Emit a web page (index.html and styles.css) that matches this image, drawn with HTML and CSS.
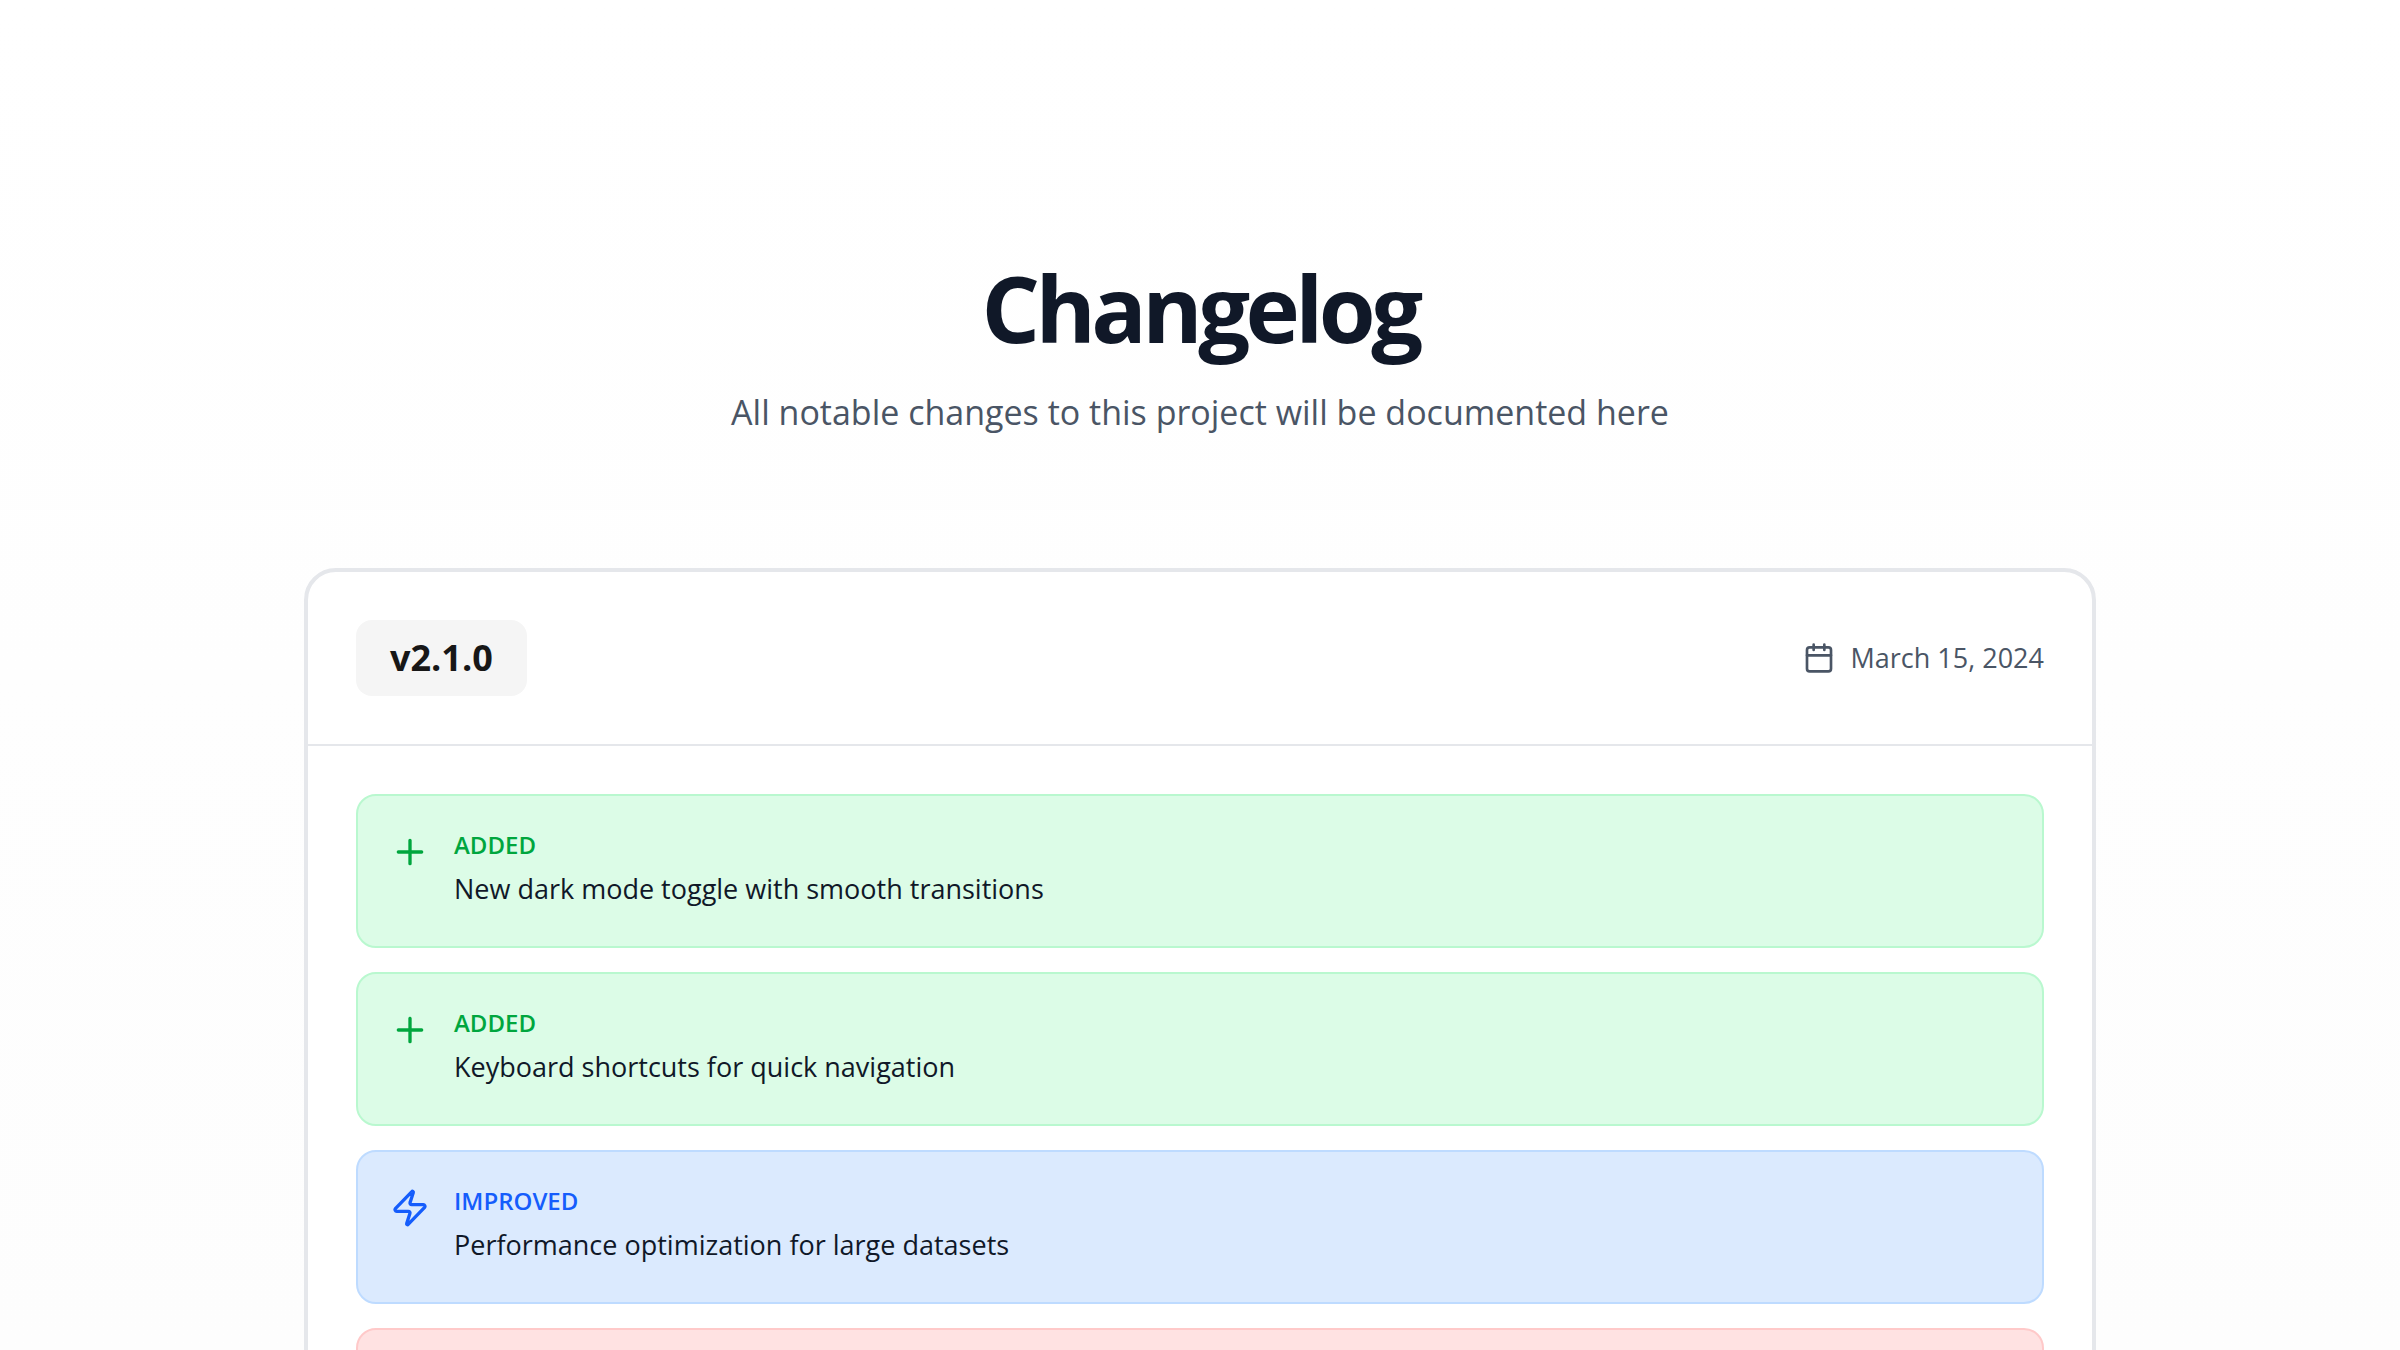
FILE: index.html
```html
<!DOCTYPE html>
<html lang="en">
<head>
<meta charset="utf-8">
<meta name="viewport" content="width=device-width, initial-scale=1">
<title>Changelog</title>
<link rel="stylesheet" href="styles.css">
</head>
<body>
<main class="page">
  <header class="intro">
    <h1 class="title">Changelog</h1>
    <p class="subtitle">All notable changes to this project will be documented here</p>
  </header>
  <article class="release">
    <header class="release-header">
      <h2 class="version">v2.1.0</h2>
      <div class="date">
        <svg class="date-icon" viewBox="0 0 24 24" aria-hidden="true"><path d="M8 2v4M16 2v4M3 10h18"/><rect x="3" y="4" width="18" height="18" rx="2"/></svg>
        <time datetime="2024-03-15">March 15, 2024</time>
      </div>
    </header>
    <ul class="changes">
      <li class="change added">
        <svg class="change-icon" viewBox="0 0 24 24" aria-hidden="true"><path d="M5 12h14M12 5v14"/></svg>
        <div>
          <p class="change-type">ADDED</p>
          <p class="change-text">New dark mode toggle with smooth transitions</p>
        </div>
      </li>
      <li class="change added">
        <svg class="change-icon" viewBox="0 0 24 24" aria-hidden="true"><path d="M5 12h14M12 5v14"/></svg>
        <div>
          <p class="change-type">ADDED</p>
          <p class="change-text">Keyboard shortcuts for quick navigation</p>
        </div>
      </li>
      <li class="change improved">
        <svg class="change-icon" viewBox="0 0 24 24" aria-hidden="true"><path d="M4 14a1 1 0 0 1-.78-1.63l9.9-10.2a.5.5 0 0 1 .86.46l-1.92 6.02A1 1 0 0 0 13 10h7a1 1 0 0 1 .78 1.63l-9.9 10.2a.5.5 0 0 1-.86-.46l1.92-6.02A1 1 0 0 0 11 14z"/></svg>
        <div>
          <p class="change-type">IMPROVED</p>
          <p class="change-text">Performance optimization for large datasets</p>
        </div>
      </li>
      <li class="change fixed"></li>
    </ul>
  </article>
</main>
</body>
</html>
```
FILE: styles.css
```css
* {
  box-sizing: border-box;
}

html {
  height: 100%;
  overflow: hidden;
}

body {
  height: 100%;
  margin: 0;
  overflow: hidden;
  background: linear-gradient(#ffffff, #fdfdfd);
  color: #101828;
  font-family: "Segoe UI", "Open Sans", "Noto Sans", sans-serif;
}

h1, h2, p, ul {
  margin: 0;
  padding: 0;
}

.page {
  max-width: 1856px;
  margin: 0 auto;
  padding: 256px 32px 128px;
}

.intro {
  margin-bottom: 128px;
  text-align: center;
}

.title {
  margin-bottom: 24px;
  font-size: 92px;
  font-weight: 700;
  line-height: 104px;
  letter-spacing: -0.05em;
}

.subtitle {
  color: #4a5565;
  font-size: 34px;
  line-height: 56px;
}

.release {
  border: 4px solid #e5e7eb;
  border-radius: 32px;
  background: #ffffff;
}

.release-header {
  display: flex;
  align-items: center;
  justify-content: space-between;
  padding: 48px;
  border-bottom: 2px solid #e5e7eb;
}

.version {
  padding: 10px 34px;
  border-radius: 16px;
  background: #f5f5f5;
  color: #171717;
  font-size: 36px;
  font-weight: 700;
  line-height: 56px;
}

.date {
  display: flex;
  align-items: center;
  gap: 16px;
  color: #4a5565;
  font-size: 27px;
  line-height: 40px;
}

.date-icon,
.change-icon {
  flex: none;
  fill: none;
  stroke: currentColor;
  stroke-width: 2;
  stroke-linecap: round;
  stroke-linejoin: round;
}

.date-icon {
  width: 32px;
  height: 32px;
}

.changes {
  display: grid;
  gap: 24px;
  padding: 48px;
  list-style: none;
}

.change {
  display: flex;
  gap: 24px;
  min-height: 154px;
  padding: 32px;
  border: 2px solid;
  border-radius: 20px;
}

.change-icon {
  width: 40px;
  height: 40px;
  margin-top: 4px;
}

.change-type {
  margin-bottom: 4px;
  font-size: 24px;
  font-weight: 600;
  line-height: 34px;
}

.change-text {
  color: #101828;
  font-size: 27px;
  line-height: 46px;
}

.added {
  border-color: #b9f8cf;
  background: #dcfce7;
  color: #00a63e;
}

.improved {
  border-color: #bedbff;
  background: #dbeafe;
  color: #155dfc;
}

.fixed {
  border-color: #ffc9c9;
  background: #ffe2e2;
  color: #e7000b;
}
```
